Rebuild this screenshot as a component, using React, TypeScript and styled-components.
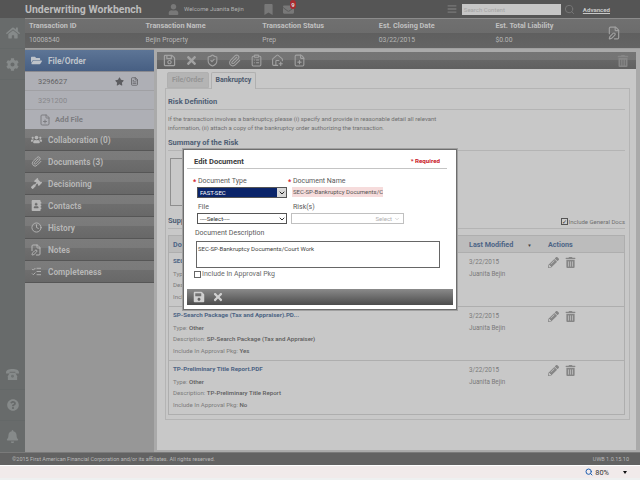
import React from 'react'
import styled, { createGlobalStyle, css } from 'styled-components'
import {
  FaHome,
  FaCog,
  FaQuestionCircle,
  FaBell,
  FaUser,
  FaBookmark,
  FaEnvelope,
  FaFolderOpen,
  FaStar,
  FaUsers,
  FaGavel,
  FaAddressBook,
  FaTimes,
  FaPencilAlt,
  FaTrashAlt,
  FaSave,
  FaRegSave,
  FaBars,
} from 'react-icons/fa'
import { Paperclip, Clock, Search, ShieldCheck, FilePlus, FileText, FileEdit, ListChecks, ClipboardList, HousePlus, ChevronDown } from 'lucide-react'

const GlobalStyle = createGlobalStyle`
  html, body {
    margin: 0;
    padding: 0;
    width: 640px;
    height: 480px;
    overflow: hidden;
    background: #fff;
    font-family: Roboto, "Open Sans", "Liberation Sans", sans-serif;
  }
  * { box-sizing: border-box; }
`

const dots = css`
  background-image: radial-gradient(rgba(0, 0, 0, 0.08) 0.7px, transparent 0.8px);
  background-size: 2px 2px;
`

const Page = styled.div`
  position: relative;
  width: 640px;
  height: 480px;
  display: flex;
  flex-direction: column;
`

const TopBar = styled.div`
  height: 18px;
  background-color: #5c5c5c;
  ${dots};
  display: flex;
  align-items: center;
  padding-left: 25px;
  color: #b4b4b4;
  flex: none;
`

const AppTitle = styled.div`
  font-size: 10.5px;
  font-weight: 700;
  color: #bcbcbc;
  width: 143px;
  white-space: nowrap;
`

const Welcome = styled.div`
  display: flex;
  align-items: center;
  gap: 5px;
  width: 95px;
  font-size: 5.9px;
  color: #b0b0b0;
  white-space: nowrap;
`

const HeaderIcon = styled.div`
  position: relative;
  display: flex;
  width: 20px;
  color: #787878;
`

const Badge = styled.span`
  position: absolute;
  left: 7px;
  top: -4px;
  width: 6px;
  height: 9px;
  border-radius: 3px;
  background: #a82c30;
  color: #ddd;
  font-size: 6px;
  font-weight: 700;
  line-height: 9px;
  text-align: center;
`

const SearchBox = styled.div`
  margin-left: auto;
  display: flex;
  align-items: center;
  padding-right: 30px;
  color: #787878;
`

const SearchInput = styled.div`
  width: 99px;
  height: 11px;
  margin: 0 3px 0 5px;
  background: #c6c6c6;
  font-size: 6px;
  line-height: 11px;
  padding-left: 2px;
  color: #a4a4a4;
`

const Advanced = styled.a`
  margin-left: 8px;
  font-size: 6.1px;
  font-weight: 700;
  color: #c8c8c8;
  text-decoration: underline;
`

const Body = styled.div`
  flex: 1;
  display: flex;
  min-height: 0;
`

const Rail = styled.div`
  width: 25px;
  flex: none;
  background-color: #707474;
  ${dots};
  display: flex;
  flex-direction: column;
  color: #868a8a;
`

const RailCell = styled.div<{ $last?: boolean }>`
  height: 31px;
  display: flex;
  align-items: center;
  justify-content: center;
  border-bottom: ${({ $last }) => ($last ? 'none' : '1px solid #646868')};
`

const RailSpacer = styled.div`
  flex: 1;
`

const Right = styled.div`
  flex: 1;
  display: flex;
  flex-direction: column;
  min-width: 0;
  border-top: 1px solid #8c8c8c;
`

const TxBar = styled.div`
  position: relative;
  height: 30px;
  flex: none;
  background: linear-gradient(#707070 0, #6c6c6c 50%, #5f5f5f 50%, #646464 100%);
  border-bottom: 1px solid #a0a0a0;
  display: grid;
  grid-template-columns: repeat(5, 116.6px);
  padding-left: 4px;
`

const TxCol = styled.div`
  display: flex;
  flex-direction: column;
`

const TxLabel = styled.div`
  height: 15px;
  line-height: 14px;
  font-size: 7.3px;
  font-weight: 700;
  color: #c0c0c0;
  white-space: nowrap;
`

const TxValue = styled.div`
  height: 13px;
  line-height: 13px;
  font-size: 6.8px;
  color: #b6b6b6;
  white-space: nowrap;
`

const TxIcon = styled.div`
  position: absolute;
  left: 582px;
  top: 7px;
  color: #a0a0a0;
  display: flex;
`

const Main = styled.div`
  flex: 1;
  display: flex;
  min-height: 0;
`

const Sidebar = styled.div`
  width: 129px;
  flex: none;
  background: #979797;
  padding-top: 1px;
`

const ActiveHead = styled.div`
  height: 22px;
  background: linear-gradient(#5d7596, #475f83);
  display: flex;
  align-items: center;
  color: #bec3ca;
  font-size: 8.4px;
  font-weight: 700;
  border-bottom: 1px solid #8a8a90;
`

const IconSlot = styled.div`
  width: 22px;
  display: flex;
  justify-content: center;
  margin-right: 1px;
  flex: none;
`

const FileRow = styled.div<{ $muted?: boolean }>`
  height: 19px;
  background: #aeafb5;
  border-bottom: 1px solid #a0a0a4;
  display: flex;
  align-items: center;
  padding-left: 13px;
  font-size: 7.4px;
  color: ${({ $muted }) => ($muted ? '#88888c' : '#626264')};
`

const FileActions = styled.div`
  margin-left: auto;
  margin-right: 15px;
  display: flex;
  align-items: center;
  gap: 6px;
  color: #5c5c60;
`

const AddFile = styled.div`
  height: 19px;
  background: #aeafb5;
  display: flex;
  align-items: center;
  padding-left: 14px;
  gap: 4px;
  font-size: 7.6px;
  font-weight: 700;
  color: #7c7c80;
`

const Accordion = styled.div`
  height: 22px;
  background: linear-gradient(#7c7c7c 0, #7a7a7a 45%, #6e6e6e 45%, #686868 100%);
  border-bottom: 1px solid #565656;
  display: flex;
  align-items: center;
  color: #b6b6b6;
  font-size: 8.3px;
  font-weight: 700;
  white-space: nowrap;
`

const ContentWrap = styled.div`
  flex: 1;
  min-width: 0;
  background: #aaaaaa;
  padding: 3px 4px 2px 3px;
  display: flex;
  flex-direction: column;
`

const Toolbar = styled.div`
  height: 17px;
  flex: none;
  background: linear-gradient(#757575 0, #747474 45%, #676767 45%, #606060 100%);
  display: flex;
  align-items: center;
  padding-left: 6px;
  gap: 8.7px;
  color: #a2a2a2;
`

const ToolbarEnd = styled.div`
  margin-left: auto;
  margin-right: 7px;
  display: flex;
  color: #868686;
`

const Panel = styled.div`
  flex: 1;
  min-height: 0;
  background: #c8c8c8;
  padding: 3px 6px 0 8px;
  display: flex;
  flex-direction: column;
`

const Tabs = styled.div`
  display: flex;
  gap: 2px;
  height: 16px;
  padding-left: 2px;
  flex: none;
  position: relative;
  z-index: 1;
`

const Tab = styled.div<{ $active?: boolean }>`
  height: ${({ $active }) => ($active ? '17px' : '16px')};
  padding: 0 4px;
  border: 1px solid #b0b0b0;
  border-bottom: ${({ $active }) => ($active ? 'none' : '1px solid #b0b0b0')};
  border-radius: 2px 2px 0 0;
  background: ${({ $active }) => ($active ? '#c8c8c8' : '#b4b4b4')};
  font-size: 7px;
  font-weight: 700;
  line-height: 15px;
  color: ${({ $active }) => ($active ? '#4c5a6e' : '#949494')};
`

const TabBox = styled.div`
  height: 332px;
  flex: none;
  border: 1px solid #b4b4b4;
  padding: 6px 4px 5px 2px;
  display: flex;
  flex-direction: column;
`

const SectionHead = styled.div<{ $gap?: boolean }>`
  height: 15px;
  flex: none;
  margin-top: ${({ $gap }) => ($gap ? '4px' : '0')};
  border-bottom: 1px solid #b4b4b4;
  display: flex;
  align-items: flex-start;
  justify-content: space-between;
  font-size: 7.5px;
  font-weight: 700;
  line-height: 13px;
  color: #4e5e74;
`

const Para = styled.p`
  margin: 4px 0 0;
  font-size: 6px;
  line-height: 9px;
  color: #707070;
  white-space: nowrap;
`

const SummaryBox = styled.div`
  width: 285px;
  height: 48px;
  margin: 7px 0 8px 2px;
  border: 1px solid #8e8e8e;
  flex: none;
`

const GeneralDocs = styled.label`
  display: flex;
  align-items: center;
  gap: 1px;
  font-size: 6px;
  font-weight: 400;
  color: #707070;
  margin-top: 1px;
`

const CheckMark = styled.span`
  width: 7px;
  height: 7px;
  border: 1px solid #555;
  background: #ccc;
  display: flex;
  align-items: center;
  justify-content: center;
  color: #333;
  font-size: 6px;
  line-height: 1;
`

const DocTable = styled.div`
  margin-top: 6px;
  border: 1px solid #aeaeae;
  flex: none;
  height: 180px;
`

const DocHead = styled.div`
  height: 17px;
  display: grid;
  grid-template-columns: 296px 79px 1fr;
  align-items: center;
  background: #bcbcbc;
  border-bottom: 1px solid #aeaeae;
  padding-left: 4px;
  font-size: 7.2px;
  font-weight: 700;
  color: #4c6486;
`

const SortArrow = styled.span`
  font-size: 4.5px;
  margin-left: 14px;
  color: #444;
`

const DocRow = styled.div`
  height: 54px;
  display: grid;
  grid-template-columns: 296px 79px 1fr;
  padding: 3px 0 0 4px;
  border-bottom: 1px solid #aeaeae;
  &:last-child {
    border-bottom: none;
  }
`

const DocInfo = styled.div`
  font-size: 6.1px;
  line-height: 11.7px;
  color: #7c7c7c;
  white-space: nowrap;
  b {
    font-weight: 500;
    color: #5c5c5c;
  }
`

const DocName = styled.div`
  font-weight: 700;
  font-size: 6.2px;
  color: #4c6484;
`

const Modified = styled.div`
  font-size: 6.3px;
  line-height: 12px;
  color: #7a7a7a;
`

const RowActions = styled.div`
  display: flex;
  gap: 6px;
  color: #868686;
  padding-top: 1px;
  align-items: flex-start;
`

const Footer = styled.div`
  height: 13px;
  flex: none;
  background-color: #6a6a6a;
  ${dots};
  display: flex;
  align-items: center;
  justify-content: space-between;
  padding: 0 11px 0 12px;
  font-size: 5.5px;
  color: #b8b8b8;
  border-top: 1px solid #7a7a7a;
`

const StatusBar = styled.div`
  height: 15px;
  flex: none;
  background: #f1eaea;
  border-top: 1px solid #fff;
  border-bottom: 2px solid #eef0f0;
  display: flex;
  align-items: center;
  justify-content: flex-end;
  padding-right: 13px;
  font-size: 7.4px;
  color: #333;
`

const Zoom = styled.div`
  display: flex;
  align-items: center;
  gap: 2px;
  color: #1e5fb0;
  span {
    color: #333;
  }
`

const ZoomCaret = styled.div`
  width: 0;
  height: 0;
  margin-left: 14px;
  border-left: 2.5px solid transparent;
  border-right: 2.5px solid transparent;
  border-top: 3px solid #111;
`

const Modal = styled.div`
  position: absolute;
  left: 183px;
  top: 149px;
  width: 274px;
  height: 161px;
  background: #fff;
  border: 1px solid #6e6e6e;
  box-shadow: 0 0 0 1px #a0a0a0;
  padding: 4px 3px 4px 3px;
  display: flex;
  flex-direction: column;
`

const ModalHead = styled.div`
  height: 15px;
  flex: none;
  margin-right: 6px;
  padding: 0 7px 0 7px;
  border-bottom: 1px solid #c4c4c4;
  display: flex;
  align-items: center;
  justify-content: space-between;
  font-size: 7.6px;
  font-weight: 700;
  color: #3a3a3a;
`

const Required = styled.span`
  font-size: 6.2px;
  font-weight: 700;
  color: #c8141e;
`

const FormGrid = styled.div`
  display: grid;
  grid-template-columns: 95px 1fr;
  padding: 6px 0 0 7px;
`

const Field = styled.div`
  display: flex;
  flex-direction: column;
  height: 26px;
`

const Label = styled.div<{ $star?: boolean }>`
  position: relative;
  height: 12px;
  padding-left: 4px;
  font-size: 7px;
  line-height: 12px;
  color: #5a5a5a;
  ${({ $star }) =>
    $star &&
    css`
      &::before {
        content: '*';
        position: absolute;
        left: -1px;
        top: 1px;
        color: #d2202a;
        font-weight: 700;
      }
    `}
`

const SelectBox = styled.div<{ $selected?: boolean }>`
  width: 90px;
  height: 11px;
  margin-left: 3px;
  border: 1px solid #555;
  background: ${({ $selected }) => ($selected ? '#0a246a' : '#fff')};
  color: ${({ $selected }) => ($selected ? '#fff' : '#333')};
  font-size: 6px;
  line-height: 9px;
  padding-left: 2px;
  display: flex;
  align-items: center;
  justify-content: space-between;
  white-space: nowrap;
`

const SelectArrow = styled.span`
  width: 9px;
  height: 9px;
  background: #d8d8d8;
  color: #222;
  display: flex;
  align-items: center;
  justify-content: center;
`

const NameInput = styled.div`
  width: 91px;
  height: 10px;
  margin-left: 3px;
  overflow: hidden;
  background: #f6dcdc;
  color: #555;
  font-size: 6px;
  line-height: 10px;
  padding-left: 1px;
  white-space: nowrap;
`

const RiskSelect = styled.div`
  width: 113px;
  height: 11px;
  margin-left: 2px;
  border: 1px solid #c0c0c0;
  display: flex;
  align-items: center;
  justify-content: flex-end;
  gap: 2px;
  padding-right: 3px;
  font-size: 6px;
  color: #b0b0b0;
`

const DescLabel = styled.div`
  height: 12px;
  margin: 0 0 2px 8px;
  font-size: 7px;
  line-height: 12px;
  color: #5a5a5a;
`

const DescBox = styled.div`
  width: 244px;
  height: 27px;
  margin-left: 9px;
  flex: none;
  border: 1px solid #666;
  padding: 2px 1px;
  font-size: 6px;
  line-height: 9px;
  color: #444;
`

const ApprovalRow = styled.label`
  display: flex;
  align-items: center;
  gap: 1px;
  margin: 2px 0 0 7px;
  font-size: 7px;
  line-height: 9px;
  color: #6a6a6a;
`

const EmptyCheck = styled.span`
  width: 7px;
  height: 7px;
  border: 1px solid #666;
  background: #fff;
`

const ModalFooter = styled.div`
  height: 16px;
  flex: none;
  margin-top: auto;
  background: linear-gradient(#8a8a8a, #4c4c4c);
  display: flex;
  align-items: center;
  gap: 7px;
  padding-left: 6px;
  color: #d0d0d0;
`

const Telephone = () => (
  <svg width="15" height="13" viewBox="0 0 16 14" fill="currentColor">
    <path d="M1 5C1 2 4 1 8 1s7 1 7 4v1h-4V4H5v2H1z" />
    <path d="M5 5h6l2 4v4H3V9z" />
    <circle cx="8" cy="9" r="1.6" fill="#707474" />
  </svg>
)

const documents = [
  { name: 'SEC-SP-Bankruptcy Documents/Court Work.PDF', type: 'Other', desc: 'SEC-SP-Bankruptcy Documents/Court Work', pkg: 'No' },
  { name: 'SP-Search Package (Tax and Appraiser).PD...', type: 'Other', desc: 'SP-Search Package (Tax and Appraiser)', pkg: 'Yes' },
  { name: 'TP-Preliminary Title Report.PDF', type: 'Other', desc: 'TP-Preliminary Title Report', pkg: 'No' },
]

const txColumns = [
  ['Transaction ID', '10008540'],
  ['Transaction Name', 'Bejin Property'],
  ['Transaction Status', 'Prep'],
  ['Est. Closing Date', '03/22/2015'],
  ['Est. Total Liability', '$0.00'],
]

const sections = [
  { label: 'Collaboration (0)', icon: <FaUsers size={11} /> },
  { label: 'Documents (3)', icon: <Paperclip size={11} /> },
  { label: 'Decisioning', icon: <FaGavel size={11} /> },
  { label: 'Contacts', icon: <FaAddressBook size={11} /> },
  { label: 'History', icon: <Clock size={11} /> },
  { label: 'Notes', icon: <FileEdit size={12} /> },
  { label: 'Completeness', icon: <ListChecks size={11} /> },
]

const App = () => {
  return (
    <Page>
      <GlobalStyle />
      <TopBar>
        <AppTitle>Underwriting Workbench</AppTitle>
        <Welcome>
          <FaUser size={11} color="#787878" />
          Welcome Juanita Bejin
        </Welcome>
        <HeaderIcon>
          <FaBookmark size={11} />
        </HeaderIcon>
        <HeaderIcon>
          <FaEnvelope size={11} />
          <Badge>9</Badge>
        </HeaderIcon>
        <SearchBox>
          <FaBars size={10} />
          <SearchInput>Search Content</SearchInput>
          <Search size={11} />
          <Advanced>Advanced</Advanced>
        </SearchBox>
      </TopBar>
      <Body>
        <Rail>
          <RailCell>
            <FaHome size={14} />
          </RailCell>
          <RailCell>
            <FaCog size={13} />
          </RailCell>
          <RailSpacer />
          <RailCell>
            <Telephone />
          </RailCell>
          <RailCell>
            <FaQuestionCircle size={12} />
          </RailCell>
          <RailCell $last>
            <FaBell size={13} />
          </RailCell>
        </Rail>
        <Right>
          <TxBar>
            {txColumns.map(([label, value]) => (
              <TxCol key={label}>
                <TxLabel>{label}</TxLabel>
                <TxValue>{value}</TxValue>
              </TxCol>
            ))}
            <TxIcon>
              <FileEdit size={14} />
            </TxIcon>
          </TxBar>
          <Main>
            <Sidebar>
              <ActiveHead>
                <IconSlot>
                  <FaFolderOpen size={11} />
                </IconSlot>
                File/Order
              </ActiveHead>
              <FileRow>
                3296627
                <FileActions>
                  <FaStar size={9} />
                  <FileText size={9} />
                </FileActions>
              </FileRow>
              <FileRow $muted>3291200</FileRow>
              <AddFile>
                <FilePlus size={12} />
                Add File
              </AddFile>
              {sections.map((s) => (
                <Accordion key={s.label}>
                  <IconSlot>{s.icon}</IconSlot>
                  {s.label}
                </Accordion>
              ))}
            </Sidebar>
            <ContentWrap>
              <Toolbar>
                <FaRegSave size={13} />
                <FaTimes size={13} />
                <ShieldCheck size={13} />
                <Paperclip size={13} />
                <ClipboardList size={13} />
                <HousePlus size={13} />
                <FilePlus size={13} />
                <ToolbarEnd>
                  <FaTrashAlt size={12} />
                </ToolbarEnd>
              </Toolbar>
              <Panel>
                <Tabs>
                  <Tab>File/Order</Tab>
                  <Tab $active>Bankruptcy</Tab>
                </Tabs>
                <TabBox>
                  <SectionHead>Risk Definition</SectionHead>
                  <Para>
                    If the transaction involves a bankruptcy, please (i) specify and provide in reasonable detail all relevant
                    <br />
                    information, (ii) attach a copy of the bankruptcy order authorizing the transaction.
                  </Para>
                  <SectionHead $gap>Summary of the Risk</SectionHead>
                  <SummaryBox />
                  <SectionHead>
                    Supporting Documents
                    <GeneralDocs>
                      <CheckMark>✓</CheckMark>
                      Include General Docs
                    </GeneralDocs>
                  </SectionHead>
                  <DocTable>
                    <DocHead>
                      <span>Document</span>
                      <span>
                        Last Modified
                        <SortArrow>▼</SortArrow>
                      </span>
                      <span>Actions</span>
                    </DocHead>
                    {documents.map((d) => (
                      <DocRow key={d.name}>
                        <DocInfo>
                          <DocName>{d.name}</DocName>
                          Type: <b>{d.type}</b>
                          <br />
                          Description: <b>{d.desc}</b>
                          <br />
                          Include In Approval Pkg: <b>{d.pkg}</b>
                        </DocInfo>
                        <Modified>
                          3/22/2015
                          <br />
                          Juanita Bejin
                        </Modified>
                        <RowActions>
                          <FaPencilAlt size={11} />
                          <FaTrashAlt size={11} />
                        </RowActions>
                      </DocRow>
                    ))}
                  </DocTable>
                </TabBox>
              </Panel>
            </ContentWrap>
          </Main>
        </Right>
      </Body>
      <Footer>
        <span>©2015 First American Financial Corporation and/or its affiliates. All rights reserved.</span>
        <span>UWB 1.0.15.10</span>
      </Footer>
      <StatusBar>
        <Zoom>
          <Search size={8} strokeWidth={3} />
          <span>80%</span>
        </Zoom>
        <ZoomCaret />
      </StatusBar>
      <Modal>
        <ModalHead>
          Edit Document
          <Required>* Required</Required>
        </ModalHead>
        <FormGrid>
          <Field>
            <Label $star>Document Type</Label>
            <SelectBox $selected>
              FAST-SEC
              <SelectArrow>
                <ChevronDown size={8} strokeWidth={3} />
              </SelectArrow>
            </SelectBox>
          </Field>
          <Field>
            <Label $star>Document Name</Label>
            <NameInput>SEC-SP-Bankruptcy Documents/Court Work</NameInput>
          </Field>
          <Field>
            <Label>File</Label>
            <SelectBox>
              ----Select----
              <ChevronDown size={8} strokeWidth={3} />
            </SelectBox>
          </Field>
          <Field>
            <Label>Risk(s)</Label>
            <RiskSelect>
              Select
              <ChevronDown size={6} />
            </RiskSelect>
          </Field>
        </FormGrid>
        <DescLabel>Document Description</DescLabel>
        <DescBox>SEC-SP-Bankruptcy Documents/Court Work</DescBox>
        <ApprovalRow>
          <EmptyCheck />
          Include In Approval Pkg
        </ApprovalRow>
        <ModalFooter>
          <FaSave size={12} />
          <FaTimes size={12} />
        </ModalFooter>
      </Modal>
    </Page>
  )
}

export default App
